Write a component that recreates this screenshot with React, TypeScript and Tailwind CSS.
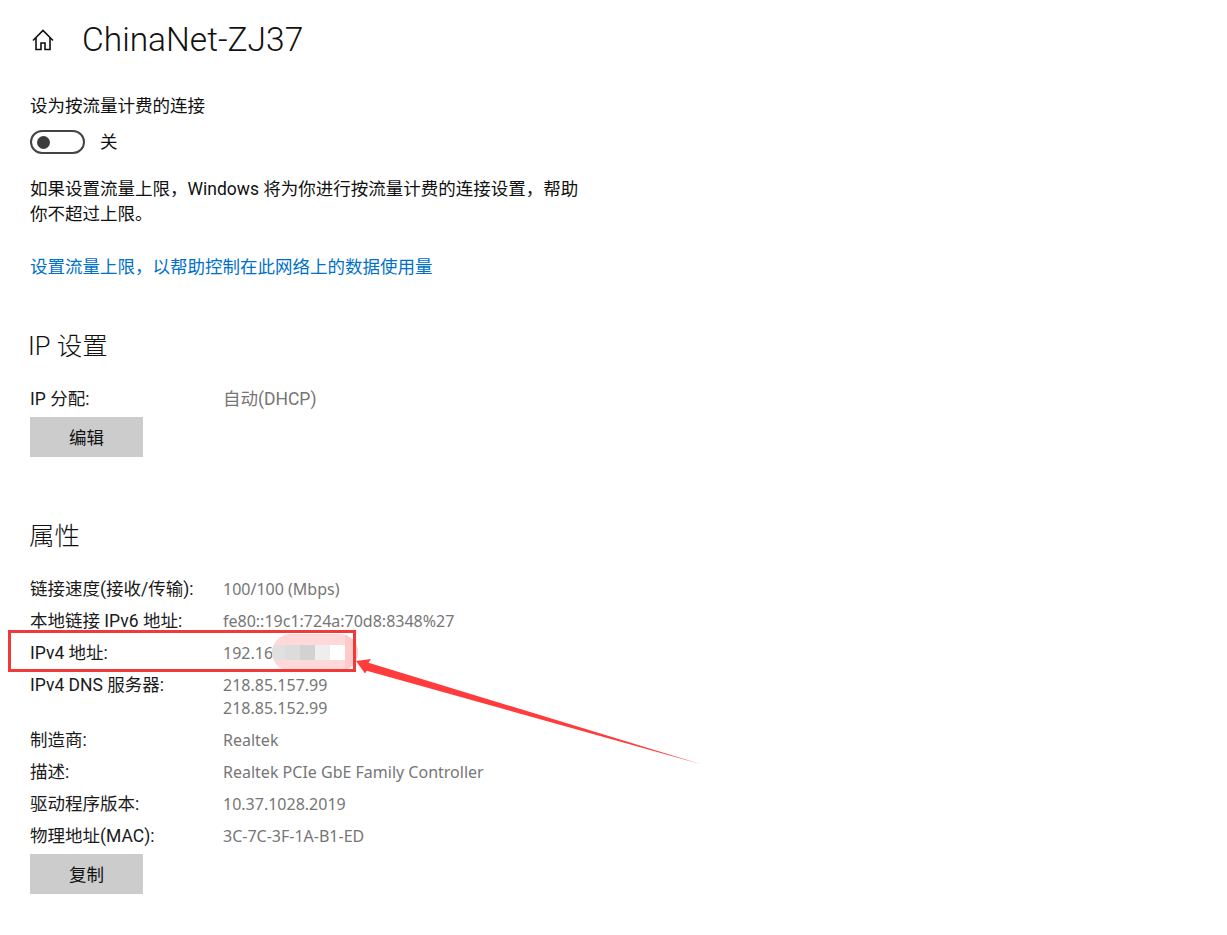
const PROPS = [
  { label: '链接速度(接收/传输):', value: ['100/100 (Mbps)'] },
  { label: '本地链接 IPv6 地址:', value: ['fe80::19c1:724a:70d8:8348%27'] },
  { label: 'IPv4 地址:', value: ['192.168'] },
  { label: 'IPv4 DNS 服务器:', value: ['218.85.157.99', '218.85.152.99'] },
  { label: '制造商:', value: ['Realtek'] },
  { label: '描述:', value: ['Realtek PCIe GbE Family Controller'] },
  { label: '驱动程序版本:', value: ['10.37.1028.2019'] },
  { label: '物理地址(MAC):', value: ['3C-7C-3F-1A-B1-ED'] },
];

function Row({ label, value }: { label: string; value: string[] }) {
  return (
    <div className="flex pb-[9px] leading-[23px]">
      <div className="w-[193px] text-[#1a1a1a]">{label}</div>
      <div className="text-[#767676] text-[16px] leading-[23px] font-['Noto_Sans',sans-serif]">
        {value.map(v => (
          <div key={v}>{v}</div>
        ))}
      </div>
    </div>
  );
}

function GrayButton({ label }: { label: string }) {
  return (
    <button type="button" className="w-[113px] h-10 pt-[3px] bg-[#cccccc] text-[#111] text-[17.5px]">
      {label}
    </button>
  );
}

export default function App() {
  return (
    <div className="relative h-[935px] bg-white pl-[30px] text-[17.5px] overflow-hidden font-['Roboto','Noto_Sans_CJK_SC',sans-serif]">
      <div className="flex items-center h-[79px]">
        <svg width="26" height="26" viewBox="0 0 26 26" fill="none" stroke="#111" strokeWidth="1.6">
          <path d="M3 13.5 13 3.5l10 10" />
          <path d="M6 11v11.5h5V16h4v6.5h5V11" />
        </svg>
        <h1 className="ml-[26px] text-[33.5px] font-light text-[#111] leading-none">ChinaNet-ZJ37</h1>
      </div>

      <div className="mt-[15px] leading-6 text-[#111]">设为按流量计费的连接</div>
      <div className="flex items-center mt-3 h-6">
        <div className="w-[55px] h-6 rounded-full border-2 border-[#444] flex items-center pl-[5px]">
          <div className="w-[13px] h-[13px] rounded-full bg-[#3c3c3c]" />
        </div>
        <span className="ml-[15px] pt-px text-[#111]">关</span>
      </div>

      <p className="mt-[23px] w-[552px] leading-[25px] text-[#111]">
        如果设置流量上限，Windows 将为你进行按流量计费的连接设置，帮助你不超过上限。
      </p>
      <div className="mt-7 leading-6 text-[#0070c9]">设置流量上限，以帮助控制在此网络上的数据使用量</div>

      <h2 className="mt-[51px] text-[25.5px] font-light leading-8 text-[#111] -ml-[2px]">IP 设置</h2>
      <div className="flex mt-[25px] leading-6">
        <div className="w-[193px] text-[#1a1a1a]">IP 分配:</div>
        <div className="text-[#767676]">自动(DHCP)</div>
      </div>
      <div className="mt-1.5">
        <GrayButton label="编辑" />
      </div>

      <h2 className="mt-[63px] text-[25.5px] font-light leading-8 text-[#111] -ml-px">属性</h2>
      <div className="mt-[26px]">
        {PROPS.map(p => (
          <Row key={p.label} label={p.label} value={p.value} />
        ))}
      </div>
      <div className="-mt-[3px]">
        <GrayButton label="复制" />
      </div>

      {/* annotation: blurred address + red box + arrow */}
      <div className="absolute left-[272px] top-[634px] w-[86px] h-[37px] rounded-[20px] bg-[#ffd9d9] overflow-hidden flex items-center">
        <div className="w-[13px] h-[15px] bg-[#e0e0e0]" />
        <div className="w-[15px] h-[15px] bg-[#dcdcdc]" />
        <div className="w-[15px] h-[15px] bg-[#d2d2d2]" />
        <div className="w-[15px] h-[15px] bg-[#eeeeee]" />
        <div className="w-[15px] h-[15px] bg-white" />
        <div className="w-[13px] h-full bg-[#ffcaca]" />
      </div>
      <div className="absolute left-[8px] top-[630px] w-[348px] h-[42px] border-[3px] border-[#f03a3a]" />
      <svg className="absolute left-0 top-0" width="1227" height="935" fill="none">
        <path d="M356 661 371 659 368.5 662.7 702 764.5 366.7 670.7 365 673.5Z" fill="#ff3b3b" />
      </svg>
    </div>
  );
}
